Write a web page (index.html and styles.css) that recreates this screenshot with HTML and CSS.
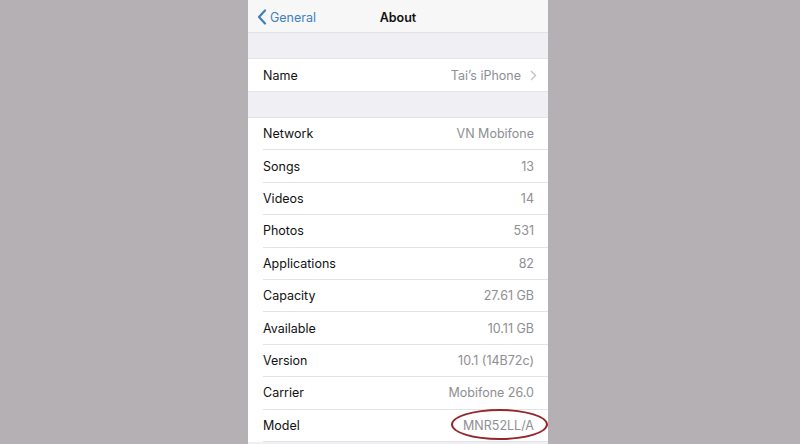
FILE: index.html
```html
<!DOCTYPE html>
<html>
<head>
<meta charset="utf-8">
<link rel="stylesheet" href="styles.css">
</head>
<body>
<div class="phone">
  <div class="nav">
    <div class="back">
      <svg class="back-chev" width="10" height="16" viewBox="0 0 10 16"><path d="M8 1.5 L2 8 L8 14.5" fill="none" stroke="#3f7fc1" stroke-width="2.2" stroke-linecap="round" stroke-linejoin="round"/></svg>
      <span>General</span>
    </div>
    <div class="title">About</div>
  </div>
  <div class="gap"></div>
  <div class="group">
    <div class="row single">
      <span class="label">Name</span>
      <span class="value">Tai’s iPhone <svg class="chev" width="7" height="11" viewBox="0 0 7 11"><path d="M1 1 L5.5 5.5 L1 10" fill="none" stroke="#c4c4c8" stroke-width="1.4"/></svg></span>
    </div>
  </div>
  <div class="gap"></div>
  <div class="group list">
    <div class="row"><span class="label">Network</span><span class="value">VN Mobifone</span></div>
    <div class="row"><span class="label">Songs</span><span class="value">13</span></div>
    <div class="row"><span class="label">Videos</span><span class="value">14</span></div>
    <div class="row"><span class="label">Photos</span><span class="value">531</span></div>
    <div class="row"><span class="label">Applications</span><span class="value">82</span></div>
    <div class="row"><span class="label">Capacity</span><span class="value">27.61 GB</span></div>
    <div class="row"><span class="label">Available</span><span class="value">10.11 GB</span></div>
    <div class="row"><span class="label">Version</span><span class="value">10.1 (14B72c)</span></div>
    <div class="row"><span class="label">Carrier</span><span class="value">Mobifone 26.0</span></div>
    <div class="row"><span class="label">Model</span><span class="value model">MNR52LL/A<span class="ring"></span></span></div>
  </div>
</div>
</body>
</html>
```
FILE: styles.css
```css
html, body {
  margin: 0;
  padding: 0;
  height: 100%;
  overflow: hidden;
}
body {
  background: #b5b0b3;
  font-family: Inter, "Liberation Sans", sans-serif;
  font-size: 12.5px;
  color: #111;
}
.phone {
  width: 300px;
  margin-left: 248px;
  height: 444px;
  background: #efeff4;
  display: flex;
  flex-direction: column;
}
.nav {
  height: 33px;
  padding-top: 2px;
  background: #f7f7f8;
  border-bottom: 1px solid #e2e2e6;
  box-sizing: border-box;
  display: flex;
  align-items: center;
  position: relative;
}
.back {
  display: flex;
  align-items: center;
  gap: 3px;
  padding-left: 9px;
  color: #3f7fc1;
  font-size: 12.5px;
}
.title {
  position: absolute;
  left: 0;
  right: 0;
  top: 2px;
  bottom: 0;
  display: flex;
  align-items: center;
  justify-content: center;
  font-weight: 600;
  pointer-events: none;
}
.gap {
  height: 25px;
  flex: none;
}
.group {
  background: #fff;
  border-top: 1px solid #e4e4e8;
  border-bottom: 1px solid #e4e4e8;
}
.group.list {
  border-bottom: none;
}
.row {
  height: 32.4px;
  box-sizing: border-box;
  display: flex;
  align-items: center;
  justify-content: space-between;
  margin-left: 15px;
  padding-right: 14px;
  border-bottom: 1px solid #e3e3e6;
}
.row.single {
  height: 32px;
  border-bottom: none;
  padding-right: 11px;
}
.value {
  color: #8e8e93;
  display: flex;
  align-items: center;
  gap: 9px;
  position: relative;
}
.model {
  position: relative;
}
.ring {
  position: absolute;
  left: -12px;
  top: -9px;
  width: 97px;
  height: 31px;
  border: 2px solid #95262c;
  border-radius: 50%;
  box-sizing: border-box;
}
```
